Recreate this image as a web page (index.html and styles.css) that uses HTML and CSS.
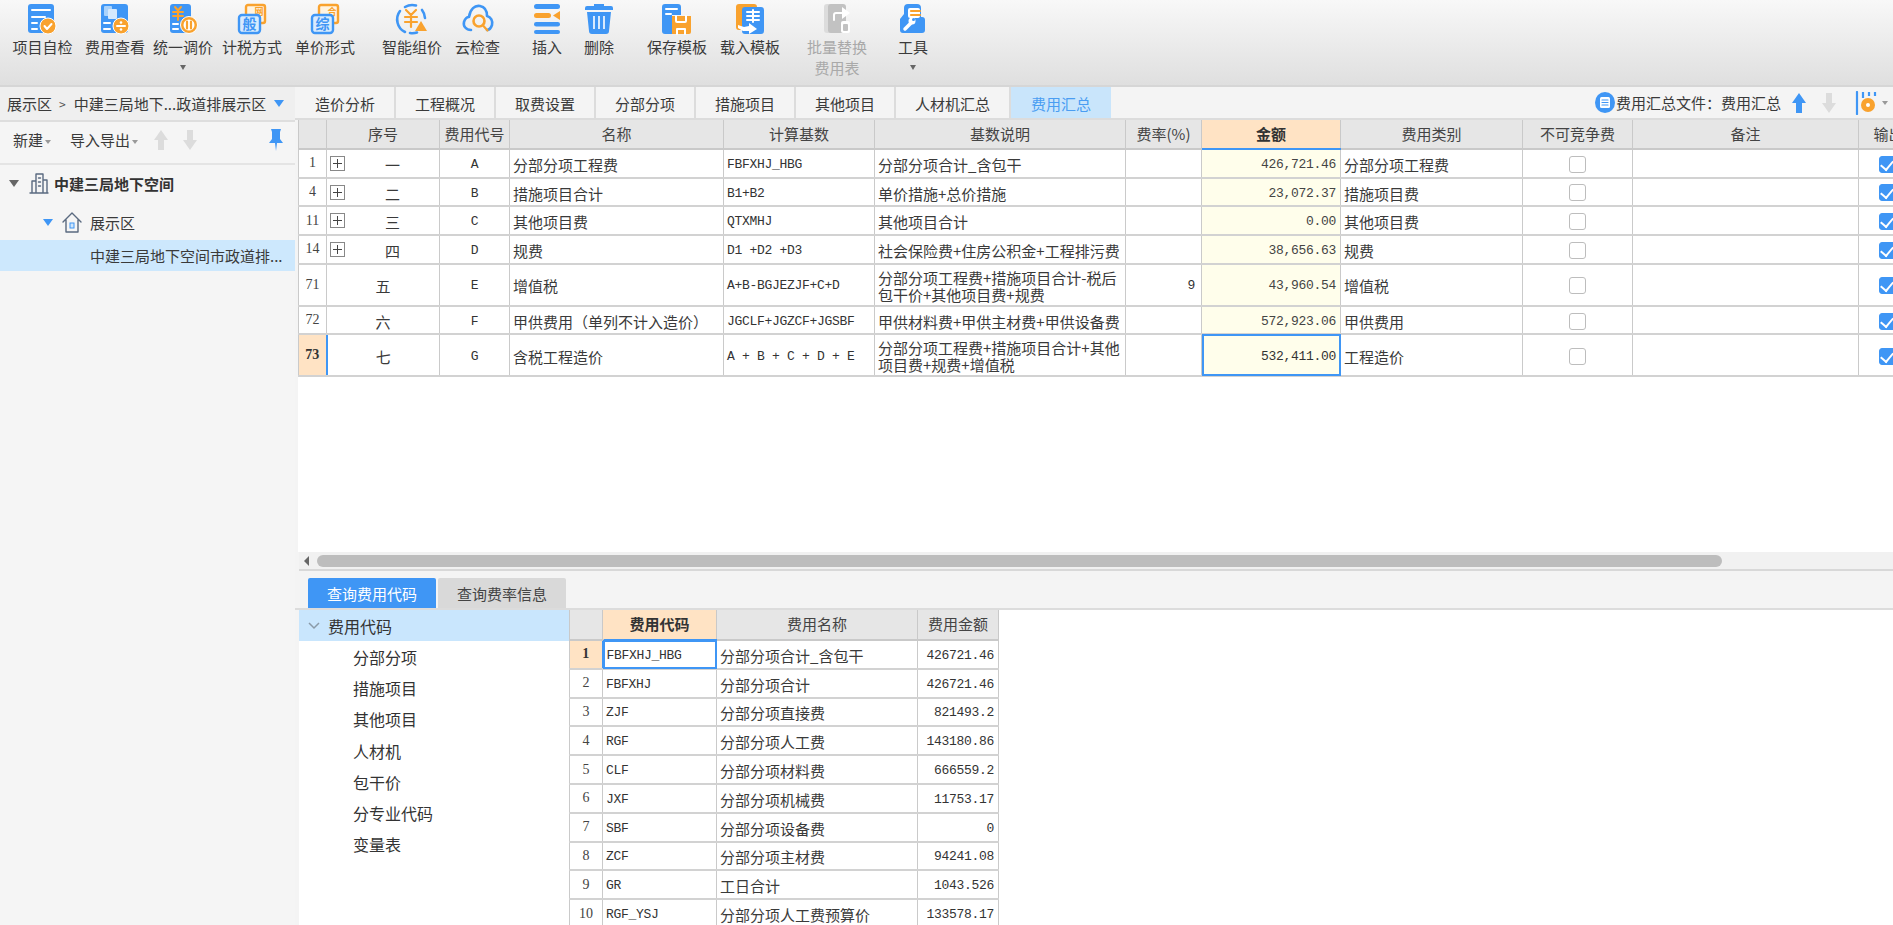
FILE: index.html
```html
<!DOCTYPE html>
<html lang="zh">
<head>
<meta charset="utf-8">
<title>费用汇总</title>
<link rel="stylesheet" href="styles.css">
</head>
<body>
<div class="app">
  <header class="toolbar">
    <div class="tool ml12"><svg class="ico" viewBox="0 0 30 30"><rect class="b" x="0" y="0" width="26" height="29" rx="3"/><path class="wl" d="M4 6h18M4 13h13M4 19h5M4 25h5"/><circle class="o ring" cx="20" cy="22" r="8"/><path class="wl" d="M16.500 22l2.500 3 4.500-5"/></svg><span>项目自检</span></div>
    <div class="tool ml12"><svg class="ico" viewBox="0 0 30 30"><rect class="b" x="1" y="0" width="27" height="29" rx="3"/><rect class="lb" x="4" y="2" width="8" height="10" rx="1"/><rect class="lb2" x="8" y="5" width="9" height="10" rx="1"/><path class="wl" d="M4 19h6M4 25h6"/><circle class="o ring" cx="21" cy="22" r="8"/><path class="wl" d="M17 22h8"/><circle class="w" cx="21" cy="18.500" r="1.300"/><circle class="w" cx="21" cy="25.500" r="1.300"/></svg><span>费用查看</span></div>
    <div class="tool ml8"><svg class="ico" viewBox="0 0 30 30"><rect class="b" x="2" y="0" width="21" height="29" rx="3"/><path class="oln" d="M7 3l3 3.500L13 3M5 8h10M5 12h10M10 7v9"/><path class="wl" d="M5 20h5M5 25h5"/><circle class="o ring" cx="21" cy="21" r="8.500"/><circle class="w" cx="21" cy="21" r="5.500"/><path class="ol" d="M19 17.500v7M23 17.500v7"/></svg><span>统一调价</span><i class="caret"></i></div>
    <div class="tool ml9"><svg class="ico" viewBox="0 0 30 30"><rect class="ow" x="9" y="1" width="19" height="18" rx="2"/><text class="gt gt-back o-t" x="22" y="11">网</text><rect class="bw" x="2" y="11" width="21" height="18" rx="3"/><text class="gt b-t" x="12.500" y="25">般</text></svg><span>计税方式</span></div>
    <div class="tool ml13"><svg class="ico" viewBox="0 0 30 30"><rect class="ow" x="9" y="1" width="19" height="18" rx="2"/><text class="gt gt-back o-t" x="22" y="11">合</text><rect class="bw" x="2" y="11" width="21" height="18" rx="3"/><text class="gt b-t" x="12.500" y="25">综</text></svg><span>单价形式</span></div>
    <div class="tool ml27"><svg class="ico" viewBox="0 0 30 30"><path class="bl" d="M8 28A14 14 0 0 1 3 7M8 3a14 14 0 0 1 11-1.500M25 6a14 14 0 0 1 3 8M20 28.500a14 14 0 0 1-7 .5"/><path class="ol" d="M9 6l5 5 5-5M8 13h12M8 18h12M14 11v12"/><path class="o" d="M24 17l6 10H18z"/></svg><span>智能组价</span></div>
    <div class="tool ml13 w45"><svg class="ico" viewBox="0 0 30 30"><path class="bl" d="M8 26C3 26 0 22 1 18c1-3 3-5 5-5C7 5 12 1 17 2c5 1 7 5 7 10 4 1 6 5 5 9-1 3-3 5-5 5"/><circle class="oc" cx="16" cy="17" r="5.500"/><path class="ol" d="M20 21.500l4.500 5"/></svg><span>云检查</span></div>
    <div class="tool ml32 w30"><svg class="ico" viewBox="0 0 30 30"><rect class="b" x="2" y="0" width="26" height="5" rx="2.500"/><rect class="o" x="2" y="9" width="17" height="5" rx="2.500"/><path class="o" d="M28 7v9l-7-4.500z"/><rect class="b" x="2" y="18" width="26" height="4.500" rx="2.250"/><rect class="b" x="2" y="26" width="26" height="4" rx="2"/></svg><span>插入</span></div>
    <div class="tool ml22 w30"><svg class="ico" viewBox="0 0 30 30"><path class="b" d="M10 0h10v2h7a2 2 0 0 1 2 2v2H1V4a2 2 0 0 1 2-2h7z"/><path class="b" d="M3 8h24l-2 19a3 3 0 0 1-3 3H8a3 3 0 0 1-3-3z"/><path class="wlt" d="M10 12v13M15 12v13M20 12v13"/></svg><span>删除</span></div>
    <div class="tool ml33"><svg class="ico" viewBox="0 0 30 30"><path class="b" d="M3 0h13a3 3 0 0 1 3 3v8H10v19H3a3 3 0 0 1-3-3V3a3 3 0 0 1 3-3z"/><path class="wl" d="M4 5h11M4 10h5"/><path class="o" d="M10 12h19v16a2 2 0 0 1-2 2H10z"/><path class="wl" d="M14 12v5a1 1 0 0 0 1 1h8a1 1 0 0 0 1-1v-5M15 30v-5h8v5"/></svg><span>保存模板</span></div>
    <div class="tool ml13"><svg class="ico" viewBox="0 0 30 30"><rect class="o" x="1" y="0" width="21" height="26" rx="3"/><rect class="b" x="7" y="3" width="22" height="27" rx="3"/><path class="wl" d="M12 8h12M12 12h12M12 16h12M18 6v12"/><path class="w" d="M3 21l6 2 5-1v-3l8 6-8 5v-3l-6 0-5-3z"/></svg><span>载入模板</span></div>
    <div class="tool ml27 off"><svg class="ico" viewBox="0 0 30 30"><rect class="g1" x="2" y="0" width="18" height="29" rx="3"/><rect class="g2" x="6" y="0" width="18" height="29" rx="3"/><path class="wl" d="M12 16v-5a2 2 0 0 1 2-2h7"/><path class="w" d="M20 3l8 6-8 6z"/><rect class="w" x="19" y="17" width="9" height="12" rx="2"/><rect class="g2" x="21" y="20" width="5" height="7" rx="1"/></svg><span>批量替换<br>费用表</span></div>
    <div class="tool ml31 w30"><svg class="ico" viewBox="0 0 30 30"><path class="b" d="M10 0h9a4 4 0 0 1 4 4v9h1a3 3 0 0 1 3 3v10a3 3 0 0 1-3 3H5a3 3 0 0 1-3-3V15l4-5V4a4 4 0 0 1 4-4z"/><rect class="w" x="10" y="4" width="12" height="10" rx="2"/><path class="ol" d="M13 7h9M13 11h9"/><path class="wl wide" d="M7 25l7-7"/><circle class="w" cx="14" cy="17" r="3.500"/><circle class="b" cx="15.500" cy="15.500" r="1.500"/></svg><span>工具</span><i class="caret"></i></div>
  </header>

  <div class="main">
    <aside class="side">
      <div class="crumb"><span>展示区</span><span class="gt-s">&gt;</span><span>中建三局地下...政道排展示区</span><i class="tri tri-blue"></i></div>
      <div class="side-tools">
        <span class="st-btn">新建<i class="mini"></i></span>
        <span class="st-btn st-io">导入导出<i class="mini"></i></span>
        <svg class="arrow st-up" viewBox="0 0 16 22"><path class="g3" d="M8 1l7 10h-4v10H5V11H1z"/></svg>
        <svg class="arrow st-down" viewBox="0 0 16 22"><path class="g3" d="M5 1h6v10h4L8 21 1 11h4z"/></svg>
        <svg class="pin" viewBox="0 0 16 24"><path class="b" d="M3 1h10l-1 3v7l3 4H9l-1 8-1-8H1l3-4V4z"/></svg>
      </div>
      <div class="tree-row lv0"><i class="tri tri-gray"></i><svg class="ti" viewBox="0 0 20 22"><path class="ln" d="M1 21h18M3 21V9h4M7 21V2h7v19M14 8h4v13M9.500 6h2M9.500 10h2M9.500 14h2"/></svg><b>中建三局地下空间</b></div>
      <div class="tree-row lv1"><i class="tri tri-blue"></i><svg class="ti" viewBox="0 0 20 22"><path class="ln" d="M1 11l9-9 9 9M4 9v12h12V9"/><rect class="bo" x="8" y="12" width="4" height="5"/></svg><span>展示区</span></div>
      <div class="tree-row lv2 sel"><span>中建三局地下空间市政道排...</span></div>
    </aside>

    <section class="content">
      <nav class="tabs">
        <span class="tab">造价分析</span><span class="tab">工程概况</span><span class="tab">取费设置</span><span class="tab">分部分项</span><span class="tab">措施项目</span><span class="tab">其他项目</span><span class="tab tab-wide">人材机汇总</span><span class="tab tab-on">费用汇总</span>
        <div class="tab-right">
          <svg class="file-ico" viewBox="0 0 20 21"><ellipse class="b" cx="10" cy="10.500" rx="10" ry="10.500"/><rect class="w" x="5" y="5" width="10" height="11" rx="1.500"/><path class="blt" d="M7 8h6M7 10.500h6M7 13h6"/></svg>
          <span>费用汇总文件：费用汇总</span>
          <svg class="arrow up" viewBox="0 0 16 22"><path class="b" d="M8 1l7 10h-4v10H5V11H1z"/></svg>
          <svg class="arrow down" viewBox="0 0 16 22"><path class="g3" d="M5 1h6v10h4L8 21 1 11h4z"/></svg>
          <svg class="gear" viewBox="0 0 22 24"><path class="bl2" d="M2 1v22"/><path class="bl2 dash" d="M8 1v6M14 1v4M20 1v4"/><circle class="o" cx="13" cy="14" r="7"/><circle class="w" cx="13" cy="14" r="2"/></svg>
          <i class="mini"></i>
        </div>
      </nav>

      <div class="grid-wrap">
        <table class="sheet main-sheet">
          <colgroup><col class="c1"><col class="c2"><col class="c3"><col class="c4"><col class="c5"><col class="c6"><col class="c7"><col class="c8"><col class="c9"><col class="c10"><col class="c11"><col class="c12"></colgroup>
          <thead><tr class="h29">
            <th></th><th>序号</th><th>费用代号</th><th>名称</th><th>计算基数</th><th>基数说明</th><th>费率(%)</th><th class="on">金额</th><th>费用类别</th><th>不可竞争费</th><th>备注</th><th>输出</th>
          </tr></thead>
          <tbody>
            <tr class="r1"><td class="no">1</td><td class="seq ex"><i class="plus"></i>一</td><td class="mono ctr">A</td><td>分部分项工程费</td><td class="mono">FBFXHJ_HBG</td><td>分部分项合计_含包干</td><td></td><td class="amt">426,721.46</td><td>分部分项工程费</td><td class="ctr"><i class="cb"></i></td><td></td><td class="chk"><i class="cb cb-on"></i></td></tr>
            <tr class="r1"><td class="no">4</td><td class="seq ex"><i class="plus"></i>二</td><td class="mono ctr">B</td><td>措施项目合计</td><td class="mono">B1+B2</td><td>单价措施+总价措施</td><td></td><td class="amt">23,072.37</td><td>措施项目费</td><td class="ctr"><i class="cb"></i></td><td></td><td class="chk"><i class="cb cb-on"></i></td></tr>
            <tr class="r1"><td class="no">11</td><td class="seq ex"><i class="plus"></i>三</td><td class="mono ctr">C</td><td>其他项目费</td><td class="mono">QTXMHJ</td><td>其他项目合计</td><td></td><td class="amt">0.00</td><td>其他项目费</td><td class="ctr"><i class="cb"></i></td><td></td><td class="chk"><i class="cb cb-on"></i></td></tr>
            <tr class="r1"><td class="no">14</td><td class="seq ex"><i class="plus"></i>四</td><td class="mono ctr">D</td><td>规费</td><td class="mono">D1 +D2 +D3</td><td>社会保险费+住房公积金+工程排污费</td><td></td><td class="amt">38,656.63</td><td>规费</td><td class="ctr"><i class="cb"></i></td><td></td><td class="chk"><i class="cb cb-on"></i></td></tr>
            <tr class="r2"><td class="no">71</td><td class="seq">五</td><td class="mono ctr">E</td><td>增值税</td><td class="mono">A+B-BGJEZJF+C+D</td><td class="two">分部分项工程费+措施项目合计-税后包干价+其他项目费+规费</td><td class="rate mono">9</td><td class="amt">43,960.54</td><td>增值税</td><td class="ctr"><i class="cb"></i></td><td></td><td class="chk"><i class="cb cb-on"></i></td></tr>
            <tr class="r1"><td class="no">72</td><td class="seq">六</td><td class="mono ctr">F</td><td>甲供费用（单列不计入造价）</td><td class="mono">JGCLF+JGZCF+JGSBF</td><td>甲供材料费+甲供主材费+甲供设备费</td><td></td><td class="amt">572,923.06</td><td>甲供费用</td><td class="ctr"><i class="cb"></i></td><td></td><td class="chk"><i class="cb cb-on"></i></td></tr>
            <tr class="r2"><td class="no no-on">73</td><td class="seq">七</td><td class="mono ctr">G</td><td>含税工程造价</td><td class="mono">A + B + C + D + E</td><td class="two">分部分项工程费+措施项目合计+其他项目费+规费+增值税</td><td></td><td class="amt amt-on">532,411.00</td><td>工程造价</td><td class="ctr"><i class="cb"></i></td><td></td><td class="chk"><i class="cb cb-on"></i></td></tr>
          </tbody>
        </table>
      </div>

      <div class="hscroll"><i class="sc-left"></i><div class="thumb"></div></div>

      <div class="sub-tabs"><span class="stab stab-on">查询费用代码</span><span class="stab">查询费率信息</span></div>

      <div class="sub-body">
        <div class="code-tree">
          <div class="ct-head"><svg class="chev" viewBox="0 0 12 8"><path d="M1 1l5 5 5-5"/></svg>费用代码</div>
          <div class="ct-item">分部分项</div>
          <div class="ct-item">措施项目</div>
          <div class="ct-item">其他项目</div>
          <div class="ct-item">人材机</div>
          <div class="ct-item">包干价</div>
          <div class="ct-item">分专业代码</div>
          <div class="ct-item">变量表</div>
        </div>
        <table class="sheet code-sheet">
          <colgroup><col class="k1"><col class="k2"><col class="k3"><col class="k4"></colgroup>
          <thead><tr class="h30"><th></th><th class="on">费用代码</th><th>费用名称</th><th>费用金额</th></tr></thead>
          <tbody>
            <tr class="r3"><td class="no no-on">1</td><td class="mono code-on">FBFXHJ_HBG</td><td>分部分项合计_含包干</td><td class="mono num">426721.46</td></tr>
            <tr class="r3"><td class="no">2</td><td class="mono">FBFXHJ</td><td>分部分项合计</td><td class="mono num">426721.46</td></tr>
            <tr class="r3"><td class="no">3</td><td class="mono">ZJF</td><td>分部分项直接费</td><td class="mono num">821493.2</td></tr>
            <tr class="r3"><td class="no">4</td><td class="mono">RGF</td><td>分部分项人工费</td><td class="mono num">143180.86</td></tr>
            <tr class="r3"><td class="no">5</td><td class="mono">CLF</td><td>分部分项材料费</td><td class="mono num">666559.2</td></tr>
            <tr class="r3"><td class="no">6</td><td class="mono">JXF</td><td>分部分项机械费</td><td class="mono num">11753.17</td></tr>
            <tr class="r3"><td class="no">7</td><td class="mono">SBF</td><td>分部分项设备费</td><td class="mono num">0</td></tr>
            <tr class="r3"><td class="no">8</td><td class="mono">ZCF</td><td>分部分项主材费</td><td class="mono num">94241.08</td></tr>
            <tr class="r3"><td class="no">9</td><td class="mono">GR</td><td>工日合计</td><td class="mono num">1043.526</td></tr>
            <tr class="r3"><td class="no">10</td><td class="mono">RGF_YSJ</td><td>分部分项人工费预算价</td><td class="mono num">133578.17</td></tr>
          </tbody>
        </table>
      </div>
    </section>
  </div>
</div>
</body>
</html>
```

FILE: styles.css
```css
* { box-sizing: border-box; }
html, body { margin: 0; height: 100%; overflow: hidden; }
body { font-family: "Noto Sans CJK SC", "Liberation Sans", sans-serif; font-size: 15px; color: #3a3a3a; background: #fff; }
i { display: inline-block; font-style: normal; }
.app { height: 925px; width: 1893px; display: flex; flex-direction: column; overflow: hidden; }

/* svg paint helpers */
.b { fill: #3f96f5; }
.o { fill: #f9a22e; }
.w { fill: #fff; }
.lb { fill: #a9d2fb; }
.lb2 { fill: #d5e9fd; }
.ring { stroke: #fff; stroke-width: 1; }
.g1 { fill: #dcdcdc; }
.g2 { fill: #c2c2c2; }
.g3 { fill: #dcdcdc; }
.wl, .wlt, .ol, .oln, .bl, .bl2, .oc, .ln, .blt { fill: none; stroke-linecap: round; stroke-linejoin: round; }
.wl { stroke: #fff; stroke-width: 2; }
.wl.wide { stroke-width: 3.500; }
.wlt { stroke: #fff; stroke-width: 1.600; stroke-linecap: butt; }
.ol { stroke: #f9a22e; stroke-width: 2.200; }
.oln { stroke: #f9a22e; stroke-width: 2; }
.bl { stroke: #3f96f5; stroke-width: 2.600; }
.bl2 { stroke: #3f96f5; stroke-width: 2.200; }
.bl2.dash { stroke-linecap: butt; }
.oc { stroke: #f9a22e; stroke-width: 2.600; }
.ln { stroke: #5a6a80; stroke-width: 1.400; }
.blt { stroke: #3f96f5; stroke-width: 1.200; }
.bo { fill: #cfe6fc; stroke: #3f96f5; stroke-width: 1; }
.ow { fill: #fff3e0; stroke: #f9a22e; stroke-width: 2.400; }
.bw { fill: #d9ebfd; stroke: #3f96f5; stroke-width: 2.400; }
.gt { font-size: 14px; text-anchor: middle; font-weight: 700; }
.gt-back { font-size: 9px; }
.o-t { fill: #f9a22e; }
.b-t { fill: #3f96f5; }

/* toolbar */
.toolbar { flex: 0 0 87px; display: flex; align-items: flex-start; background: linear-gradient(#f8f8f8, #dfdfdf); border-bottom: 2px solid #d6d6d6; }
.tool { width: 60px; display: flex; flex-direction: column; align-items: center; text-align: center; line-height: 21px; padding-top: 4px; white-space: nowrap; flex: none; }
.tool span { margin-top: 2px; }
.ico { width: 30px; height: 30px; display: block; flex: none; overflow: visible; }
.w45 { width: 45px; }
.w30 { width: 30px; }
.off { color: #a9a9a9; }
.ml8 { margin-left: 8px; }
.ml9 { margin-left: 9px; }
.ml12 { margin-left: 12.500px; }
.ml13 { margin-left: 13px; }
.ml22 { margin-left: 22px; }
.ml27 { margin-left: 27px; }
.ml31 { margin-left: 31px; }
.ml32 { margin-left: 32px; }
.ml33 { margin-left: 33px; }
.caret { width: 0; height: 0; margin-top: 8px; border: 3.500px solid transparent; border-top: 5px solid #666; border-bottom: 0; }

/* layout */
.main { flex: 1; display: flex; min-height: 0; }
.side { flex: 0 0 295px; background: #f5f5f5; display: flex; flex-direction: column; }
.content { flex: 1; min-width: 0; display: flex; flex-direction: column; background: #f4f4f4; }

/* sidebar */
.crumb { height: 35px; padding: 0 7px; display: flex; align-items: center; gap: 7px; background: #efefef; border-bottom: 2px solid #dedede; white-space: nowrap; }
.crumb span:nth-child(3) { margin-left: 1px; }
.gt-s { font-size: 12px; color: #555; }
.tri { width: 0; height: 0; flex: none; border-left: 5px solid transparent; border-right: 5px solid transparent; border-top: 7px solid #3f96f5; border-bottom: 0; }
.crumb .tri { margin-left: 1px; }
.tri-gray { border-top-color: #666; }
.tri-blue { border-top-color: #3f96f5; }
.mini { width: 0; height: 0; margin-left: 2px; border: 3px solid transparent; border-top: 4px solid #999; border-bottom: 0; vertical-align: middle; }
.side-tools { height: 43px; display: flex; align-items: center; padding: 0 0 6px 13px; border-bottom: 2px solid #e4e4e4; white-space: nowrap; }
.st-io { margin-left: 19px; }
.arrow { width: 16px; height: 22px; flex: none; }
.st-up { margin-left: 15px; }
.st-down { margin-left: 13px; }
.pin { width: 16px; height: 24px; margin-left: 70px; flex: none; }
.tree-row { display: flex; align-items: center; white-space: nowrap; }
.ti { width: 20px; height: 22px; flex: none; }
.lv0 { height: 36px; padding-left: 9px; color: #333; }
.lv0 .ti { margin-left: 10px; margin-right: 5px; }
.lv0 b { font-weight: 700; }
.lv1 { height: 39px; padding: 3px 0 0 43px; }
.lv1 .ti { margin-left: 9px; margin-right: 8px; }
.lv2 { height: 31px; padding-left: 90px; }
.sel { background: #cde8fd; }

/* tabs */
.tabs { flex: 0 0 33px; display: flex; align-items: stretch; padding-left: 1px; background: #f4f4f4; border-bottom: 2px solid #dcdcdc; white-space: nowrap; }
.tab { width: 100px; padding-top: 1px; display: flex; align-items: center; justify-content: center; border-right: 2px solid #dcdcdc; }
.tab-wide { width: 115px; }
.tab-on { background: #c9e5fb; color: #4a9df2; border-right: 0; }
.tab-right { margin-left: auto; display: flex; align-items: center; }
.file-ico { width: 20px; height: 21px; margin-right: 1px; }
.tab-right .up { margin-left: 10px; }
.tab-right .down { margin-left: 14px; }
.gear { width: 22px; height: 24px; margin-left: 18px; }
.tab-right .mini { margin-left: 5px; margin-right: 5px; }

/* main grid */
.grid-wrap { flex: 0 0 432px; margin-left: 3px; background: #fff; overflow: hidden; }
.sheet { border-collapse: collapse; table-layout: fixed; background: #fff; }
.sheet th { background: #e6e6e6; font-weight: 400; color: #444; text-align: center; padding: 0 0 2px; border: 1px solid #c9c9c9; border-top: 0; border-bottom-width: 2px; overflow: hidden; white-space: nowrap; }
.sheet td { padding: 2px 3px 0; border: 1px solid #cacaca; border-top: 0; border-bottom: 2px solid #d2d2d2; white-space: nowrap; overflow: hidden; vertical-align: middle; }
.main-sheet { width: 1620px; }
.c1 { width: 28px; } .c2 { width: 113px; } .c3 { width: 70px; } .c4 { width: 214px; } .c5 { width: 151px; } .c6 { width: 251px; }
.c7 { width: 76px; } .c8 { width: 139px; } .c9 { width: 182px; } .c10 { width: 110px; } .c11 { width: 226px; } .c12 { width: 60px; }
.h29 { height: 29px; }
.h30 { height: 30px; }
.r1 { height: 28.700px; }
.r2 { height: 42px; }
.r3 { height: 28.800px; }
.sheet th.on { background: #ffe3c4; font-weight: 700; color: #333; border-bottom: 2px solid #3f96f5; }
.mono { font-family: "Liberation Mono", "DejaVu Sans Mono", monospace; font-size: 13px; letter-spacing: -.3px; color: #333; }
.ctr { text-align: center; }
.sheet td.no { font-family: "Liberation Serif", serif; text-align: center; padding: 0; background: #fff; font-size: 14px; color: #444; }
.sheet td.no-on { background: #ffe3c4; font-weight: 700; color: #333; border-right: 2px solid #3f96f5; }
.sheet td.seq { text-align: center; position: relative; }
.sheet td.ex { padding-left: 22px; }
.plus { position: absolute; left: 3px; top: 6px; width: 15px; height: 15px; border: 1px solid #888; background: #fff;
  background-image: linear-gradient(#444, #444), linear-gradient(#444, #444); background-size: 9px 1px, 1px 9px; background-position: center; background-repeat: no-repeat; }
.sheet td.two { white-space: normal; line-height: 17px; }
.sheet td.rate { text-align: right; padding-right: 6px; }
.sheet td.amt { font-family: "Liberation Mono", monospace; font-size: 13px; letter-spacing: -.3px; text-align: right; padding-right: 4px; background: #fffeeb; color: #444; }
.sheet td.amt-on { outline: 2px solid #3f96f5; outline-offset: -2px; color: #333; }
.cb { width: 17px; height: 17px; margin-bottom: 3px; border: 1.500px solid #bdbdbd; border-radius: 3px; background: #fff; vertical-align: middle; }
.sheet td.chk { padding-left: 20px; }
.cb-on { background: #3f96f5; border-color: #3f96f5; position: relative; }
.cb-on::after { content: ""; position: absolute; left: 3px; top: 1px; width: 6px; height: 10px; border: solid #fff; border-width: 0 2px 2px 0; transform: rotate(40deg); }

/* scrollbar */
.hscroll { flex: 0 0 19px; margin-left: 4px; display: flex; align-items: center; background: #f1f1f1; border-bottom: 2px solid #d8d8d8; padding-left: 5px; }
.sc-left { width: 0; height: 0; border: 5px solid transparent; border-right: 5px solid #666; border-left: 0; }
.thumb { width: 1405px; height: 12px; margin-left: 8px; border-radius: 6px; background: #bdbdbd; }

/* sub panel */
.sub-tabs { flex: 0 0 39px; display: flex; align-items: flex-end; gap: 2px; padding-left: 13px; border-bottom: 2px solid #dcdcdc; }
.stab { width: 128px; height: 30px; display: flex; align-items: center; justify-content: center; background: #d9d9d9; color: #444; border-radius: 2px 2px 0 0; }
.stab-on { background: #3f96f5; color: #fff; }
.sub-body { flex: 1; min-height: 0; margin-left: 4px; display: flex; background: #fff; overflow: hidden; }
.code-tree { flex: 0 0 270px; font-size: 16px; color: #333; }
.ct-head { height: 31px; display: flex; align-items: center; background: #c9e6fd; padding-left: 9px; }
.chev { width: 12px; height: 8px; margin-right: 8px; fill: none; stroke: #8a9aa8; stroke-width: 1.500; }
.ct-item { height: 31.300px; display: flex; align-items: center; padding-left: 54px; }
.code-sheet { width: 429px; flex: none; align-self: flex-start; }
.k1 { width: 33px; } .k2 { width: 114px; } .k3 { width: 201px; } .k4 { width: 81px; }
.sheet td.num { text-align: right; padding-right: 4px; }
.sheet td.code-on { outline: 2px solid #3f96f5; outline-offset: -2px; }
```
